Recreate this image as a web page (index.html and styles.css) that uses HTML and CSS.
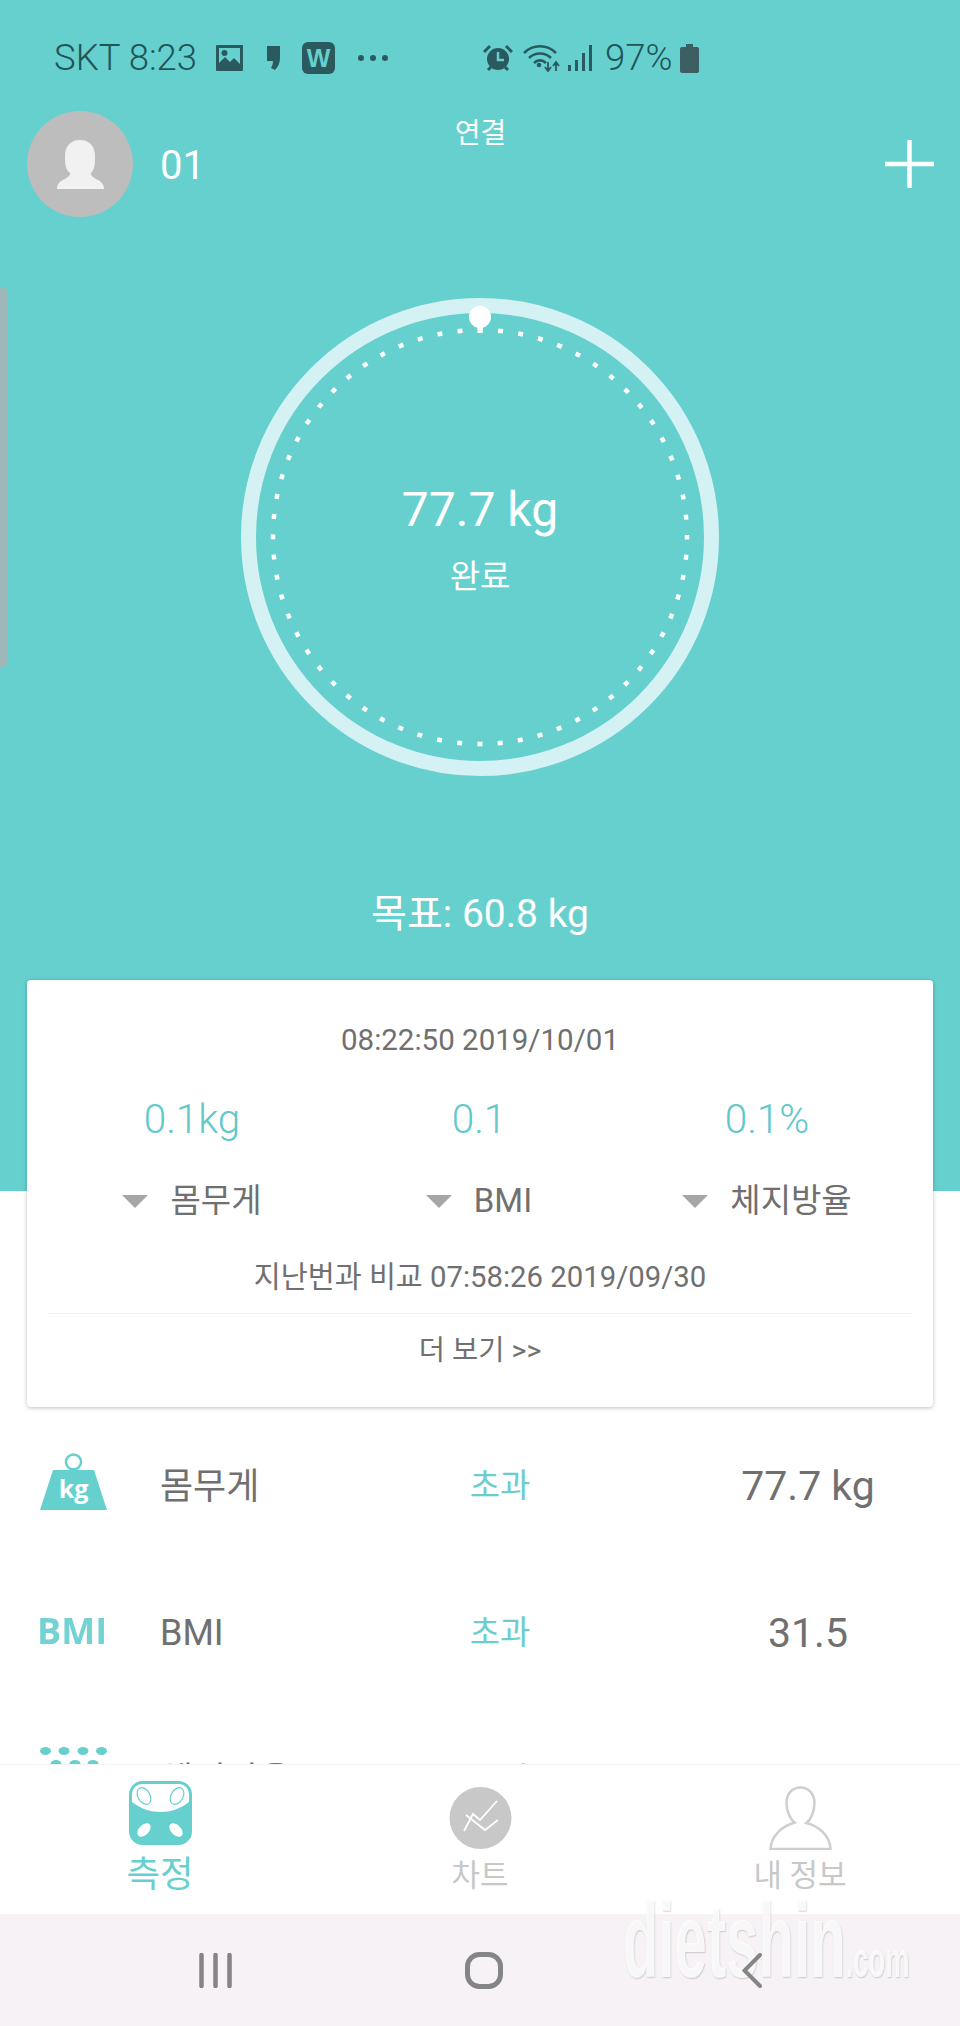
FILE: index.html
```html
<!DOCTYPE html>
<html lang="ko">
<head>
  <meta charset="UTF-8">
  <title>측정</title>
  <link rel="stylesheet" href="styles.css">
</head>
<body>
  <div class="side-handle"></div>

  <main class="screen">
    <section class="hero">
      <div class="status-bar">
        <div class="status-left">
          <span class="status-text">SKT 8:23</span>
          <svg class="icon-pic" viewBox="0 0 27 26">
            <path fill="#2b5a5e" fill-rule="evenodd" d="M1 0h25a1 1 0 0 1 1 1v24a1 1 0 0 1-1 1H1a1 1 0 0 1-1-1V1a1 1 0 0 1 1-1zM3 3v15l6-6 5 5 4-4 6 6V3z"/>
            <circle cx="8.5" cy="8" r="3" fill="#2b5a5e"/>
          </svg>
          <svg class="icon-quote" viewBox="0 0 15 24">
            <path fill="#2b5a5e" d="M1 0h13v12c0 5-2 9-5 12l-4-2c1-2 2-4 2-7H1z"/>
          </svg>
          <span class="icon-w">W</span>
          <svg class="icon-more" viewBox="0 0 32 8">
            <circle cx="4" cy="4" r="3"/><circle cx="16" cy="4" r="3"/><circle cx="28" cy="4" r="3"/>
          </svg>
        </div>
        <div class="status-right">
          <svg class="icon-alarm" viewBox="0 0 30 28">
            <circle cx="15" cy="15" r="11" fill="#2b5a5e"/>
            <path d="M15 8v8h6" fill="none" stroke="#66d0cf" stroke-width="2.5"/>
            <path d="M1 8l6-6M29 8l-6-6M5 26l3-3M25 26l-3-3" fill="none" stroke="#2b5a5e" stroke-width="3"/>
          </svg>
          <svg class="icon-wifi" viewBox="0 0 37 28">
            <g fill="none" stroke="#2b5a5e" stroke-width="2.6">
              <path d="M1 9c9-9 23-9 32 0"/>
              <path d="M6 14c6-6 16-6 22 0"/>
              <path d="M11 19c3.500-3.500 8.500-3.500 12 0"/>
            </g>
            <circle cx="16" cy="21" r="2.300" fill="#2b5a5e"/>
            <path d="M25 18v8M22 23l3 4 3-4M33 27v-8M30 22l3-4 3 4" fill="none" stroke="#2b5a5e" stroke-width="1.800"/>
          </svg>
          <svg class="icon-signal" viewBox="0 0 24 26">
            <path fill="#2b5a5e" d="M0 20h3v6H0zM7 15h3v11H7zM14 8h3v18h-3zM21 0h3v26h-3z"/>
          </svg>
          <span class="status-text status-pct">97%</span>
          <svg class="icon-battery" viewBox="0 0 19 29">
            <path fill="#3d5f63" d="M6 0h7v3h4a2 2 0 0 1 2 2v22a2 2 0 0 1-2 2H2a2 2 0 0 1-2-2V5a2 2 0 0 1 2-2h4z"/>
          </svg>
        </div>
      </div>

      <div class="profile-row">
        <div class="profile">
          <svg class="avatar" viewBox="0 0 106 106">
            <circle cx="53" cy="53" r="53" fill="#bdbdbd"/>
            <path fill="#f1f1f1" d="M38 45C38 35 44 29 53 29s15 6 15 16c0 7 0 13-4 17-1 2 2 4 5 6 5 2 8 5 8 10H30c0-5 3-8 8-10 3-2 6-4 5-6-5-4-5-10-5-17z"/>
          </svg>
          <span class="profile-name">01</span>
        </div>
        <span class="link-state">연결</span>
        <svg class="icon-plus" viewBox="0 0 49 48">
          <path d="M0 24h49M24.500 0v48" fill="none" stroke="#fff" stroke-width="4.500"/>
        </svg>
      </div>

      <div class="gauge">
        <svg class="gauge-ring" viewBox="0 0 480 480">
          <circle cx="240" cy="240" r="231.500" fill="none" stroke="#d4f1f3" stroke-width="15"/>
          <circle cx="240" cy="240" r="207" fill="none" stroke="#fff" stroke-width="4.500" stroke-dasharray="5 15.320" stroke-dashoffset="2.500"/>
          <circle cx="240" cy="20" r="11" fill="#fff"/>
          <rect x="237.500" y="26" width="5" height="10" fill="#fff"/>
        </svg>
        <div class="gauge-text">
          <div class="gauge-value">77.7 kg</div>
          <div class="gauge-label">완료</div>
        </div>
      </div>

      <div class="goal">목표: 60.8 kg</div>

      <div class="card">
        <div class="card-date">08:22:50 2019/10/01</div>
        <div class="card-grid">
          <div class="card-value">0.1kg</div>
          <div class="card-value">0.1</div>
          <div class="card-value">0.1%</div>
          <div class="card-label"><i class="tri"></i>몸무게</div>
          <div class="card-label"><i class="tri"></i>BMI</div>
          <div class="card-label"><i class="tri"></i>체지방율</div>
        </div>
        <div class="card-compare">지난번과 비교 07:58:26 2019/09/30</div>
        <div class="card-more">더 보기 &gt;&gt;</div>
      </div>
    </section>

    <section class="rows">
      <div class="row">
        <svg class="row-icon" viewBox="0 0 67 57">
          <circle cx="33.500" cy="9" r="7.500" fill="none" stroke="#66d0cf" stroke-width="2.500"/>
          <path fill="#66d0cf" d="M31 15h5v3h-5zM13 17h41l13 40H0z"/>
          <text x="33.500" y="45" class="kg-text">kg</text>
        </svg>
        <span class="row-name row-name-ko">몸무게</span>
        <span class="row-state">초과</span>
        <span class="row-value">77.7 kg</span>
      </div>
      <div class="row">
        <span class="bmi-icon">BMI</span>
        <span class="row-name">BMI</span>
        <span class="row-state">초과</span>
        <span class="row-value">31.5</span>
      </div>
      <div class="row">
        <svg class="row-icon" viewBox="0 0 67 57">
          <g fill="#66d0cf">
            <ellipse cx="5.500" cy="4" rx="5.500" ry="4"/><ellipse cx="24" cy="4" rx="5.500" ry="4"/>
            <ellipse cx="43" cy="4" rx="5.500" ry="4"/><ellipse cx="61.500" cy="4" rx="5.500" ry="4"/>
            <ellipse cx="16" cy="17" rx="5.500" ry="4"/><ellipse cx="35" cy="17" rx="5.500" ry="4"/>
            <ellipse cx="53" cy="17" rx="5.500" ry="4"/>
          </g>
        </svg>
        <span class="row-name row-name-ko">체지방율</span>
        <span class="row-state">초과</span>
        <span class="row-value">0.1%</span>
      </div>
    </section>
  </main>

  <nav class="tabbar">
    <div class="tab tab-active">
      <svg class="tab-icon" viewBox="0 0 63 64">
        <rect x="1.500" y="1.500" width="60" height="61" rx="12" fill="#66d0cf" stroke="#66d0cf" stroke-width="3"/>
        <path fill="#fff" d="M3 13a10 10 0 0 1 10-10h37a10 10 0 0 1 10 10v8c-9 7-19 10-28.500 10S12 28 3 21z"/>
        <ellipse cx="15" cy="15" rx="6" ry="9" transform="rotate(-30 15 15)" fill="#fff" stroke="#66d0cf" stroke-width="1.200"/>
        <ellipse cx="48" cy="15" rx="6" ry="9" transform="rotate(30 48 15)" fill="#fff" stroke="#66d0cf" stroke-width="1.200"/>
        <ellipse cx="15" cy="49" rx="5" ry="8" transform="rotate(45 15 49)" fill="#fff"/>
        <ellipse cx="47" cy="49" rx="5" ry="8" transform="rotate(-45 47 49)" fill="#fff"/>
      </svg>
      <span class="tab-label">측정</span>
    </div>
    <div class="tab">
      <svg class="tab-icon" viewBox="0 0 63 64">
        <circle cx="31.500" cy="32" r="31" fill="#c8c8c8"/>
        <path d="M15 45l9-17 7 6 17-19M17 29l19 15 13-10" fill="none" stroke="#fff" stroke-width="1.800"/>
      </svg>
      <span class="tab-label">차트</span>
    </div>
    <div class="tab">
      <svg class="tab-icon" viewBox="0 0 63 64">
        <path d="M31.500 1.500c-8 0-14 6-14 15 0 9 4 17 8 20C14 40 2 49 1.500 63h60c-.5-14-12.500-23-24-26 4-3 8-11 8-20 0-9-6-15.500-14-15.500z" fill="none" stroke="#cfcfcf" stroke-width="2.500"/>
      </svg>
      <span class="tab-label">내 정보</span>
    </div>
  </nav>

  <div class="sys-nav">
    <svg class="sys-icon" viewBox="0 0 33 35">
      <path d="M2.500 2v31M16.500 2v31M30.500 2v31" fill="none" stroke="#858585" stroke-width="4.500" stroke-linecap="round"/>
    </svg>
    <svg class="sys-icon" viewBox="0 0 38 37">
      <rect x="2.500" y="2.500" width="33" height="32" rx="12" fill="none" stroke="#858585" stroke-width="5"/>
    </svg>
    <svg class="sys-icon sys-back" viewBox="0 0 20 35">
      <path d="M18 2L2.500 17.500 18 33" fill="none" stroke="#858585" stroke-width="4" stroke-linecap="round"/>
    </svg>
  </div>

  <div class="watermark"><span class="wm-big">dietshin</span><span class="wm-small">.com</span></div>
</body>
</html>
```

FILE: styles.css
```css
* {
  box-sizing: border-box;
}

html, body {
  margin: 0;
  padding: 0;
}

body {
  position: relative;
  width: 960px;
  height: 2026px;
  overflow: hidden;
  display: flex;
  flex-direction: column;
  background: #fff;
  font-family: Roboto, "Noto Sans CJK KR", sans-serif;
  color: #707070;
}

.side-handle {
  position: absolute;
  left: 0;
  top: 287px;
  width: 8px;
  height: 381px;
  background: #9db8b6;
  border-radius: 0 10px 10px 0;
}

.screen {
  height: 1764px;
  overflow: hidden;
  flex: none;
}

/* teal part stops behind the card */
.hero {
  background: linear-gradient(#66d0cf 1191px, #fff 1191px);
  height: 1407px;
  padding-top: 42px;
}

.status-bar {
  height: 32px;
  display: flex;
  align-items: center;
  padding-left: 54px;
}

.status-left,
.status-right {
  display: flex;
  align-items: center;
}

.status-left {
  width: 429px;
}

.status-text {
  font-size: 36.500px;
  font-weight: 300;
  line-height: 32px;
  color: #1f5559;
}

.icon-pic {
  width: 27px;
  height: 26px;
  margin-left: 19px;
}

.icon-quote {
  width: 15px;
  height: 24px;
  margin-left: 23px;
}

.icon-w {
  width: 33px;
  height: 32px;
  margin-left: 21px;
  background: #2b5a5e;
  border-radius: 6px;
  color: #66d0cf;
  font-family: "Liberation Sans", sans-serif;
  font-weight: bold;
  font-size: 25px;
  line-height: 32px;
  text-align: center;
}

.icon-more {
  width: 32px;
  height: 8px;
  margin-left: 22px;
  fill: #2b5a5e;
}

.icon-alarm {
  width: 30px;
  height: 28px;
}

.icon-wifi {
  width: 37px;
  height: 28px;
  margin-left: 10px;
}

.icon-signal {
  width: 24px;
  height: 26px;
  margin-left: 8px;
}

.status-pct {
  margin-left: 13px;
}

.icon-battery {
  width: 19px;
  height: 29px;
  margin-left: 8px;
}

.profile-row {
  height: 106px;
  margin-top: 37px;
  padding: 0 26px 0 27px;
  display: grid;
  grid-template-columns: 1fr auto 1fr;
  align-items: center;
}

.profile {
  display: flex;
  align-items: center;
  gap: 27px;
}

.avatar {
  width: 106px;
  height: 106px;
}

.profile-name {
  margin-top: 2px;
  font-size: 40px;
  color: #fff;
}

.link-state {
  align-self: start;
  margin-top: 9px;
  font-size: 28px;
  line-height: 28px;
  color: #fff;
}

.icon-plus {
  justify-self: end;
  width: 49px;
  height: 48px;
}

.gauge {
  width: 480px;
  height: 480px;
  margin: 80px auto 0;
  display: grid;
}

.gauge-ring,
.gauge-text {
  grid-area: 1 / 1;
}

.gauge-ring {
  width: 480px;
  height: 480px;
}

.gauge-text {
  color: #fff;
  text-align: center;
  padding-top: 185px;
}

.gauge-value {
  font-size: 48px;
  line-height: 56px;
}

.gauge-label {
  margin-top: 19px;
  font-size: 33px;
  line-height: 40px;
}

.goal {
  margin-top: 111px;
  color: #fff;
  font-size: 39px;
  line-height: 52px;
  text-align: center;
}

.card {
  width: 906px;
  height: 427px;
  margin: 40px 27px 0;
  padding-top: 40px;
  background: #fff;
  border-radius: 4px;
  box-shadow: 0 1px 4px rgba(0,0,0,0.25);
  text-align: center;
}

.card-date {
  font-size: 29.500px;
  line-height: 40px;
}

.card-grid {
  display: grid;
  grid-template-columns: 330px 244px 332px;
  margin-top: 34px;
}

.card-value {
  font-size: 40.500px;
  font-weight: 300;
  line-height: 50px;
  color: #5fc8c8;
}

.card-label {
  margin-top: 36px;
  font-size: 33px;
  line-height: 42px;
  display: flex;
  justify-content: center;
  align-items: center;
  gap: 22px;
}

.tri {
  width: 0;
  height: 0;
  border-left: 13px solid transparent;
  border-right: 13px solid transparent;
  border-top: 13px solid #a6a6a6;
}

.card-compare {
  margin-top: 35px;
  font-size: 29.300px;
  line-height: 40px;
}

.card-more {
  margin: 16px 21px 0;
  padding-top: 17px;
  border-top: 1px solid #f2f2f2;
  font-size: 28.500px;
  line-height: 40px;
}

.rows {
  padding: 5px 0 0 40px;
}

.row {
  height: 147px;
  display: grid;
  grid-template-columns: 120px 280px 278px 180px;
  align-items: center;
}

.row-icon {
  width: 67px;
  height: 57px;
  margin-bottom: 8px;
}

.kg-text {
  font-family: "Open Sans", sans-serif;
  font-weight: bold;
  font-size: 25px;
  fill: #fff;
  text-anchor: middle;
}

.bmi-icon {
  margin: 0 0 5px -3px;
  font-family: "Open Sans", sans-serif;
  font-weight: bold;
  font-size: 36px;
  color: #74d3d2;
  filter: blur(0.7px);
}

.row-name {
  font-size: 36px;
}

.row-name-ko {
  margin-bottom: 6px;
}

.row-state {
  width: 120px;
  margin-bottom: 6px;
  text-align: center;
  font-size: 33px;
  color: #6dcdcd;
}

.row-value {
  text-align: center;
  font-size: 41px;
}

.tabbar {
  height: 150px;
  flex: none;
  display: grid;
  grid-template-columns: 320px 320px 320px;
  background: #fff;
  border-top: 1px solid #f3f3f3;
}

.tab {
  display: flex;
  flex-direction: column;
  align-items: center;
  padding-top: 21px;
  color: #c8c8c8;
}

.tab-icon {
  width: 63px;
  height: 64px;
}

.tab-label {
  margin-top: 6px;
  font-size: 31px;
  line-height: 40px;
}

.tab-active {
  padding-top: 16px;
  color: #66d0cf;
}

.tab-active .tab-label {
  font-size: 36.500px;
  margin-top: 10px;
}

.sys-nav {
  height: 112px;
  flex: none;
  background: #f6f2f6;
  display: grid;
  grid-template-columns: 266px 277px auto;
  align-items: center;
  padding-left: 199px;
}

.sys-icon:nth-child(1) {
  width: 33px;
  height: 35px;
}

.sys-icon:nth-child(2) {
  width: 38px;
  height: 37px;
}

.sys-icon:nth-child(3) {
  width: 20px;
  height: 35px;
}

/* chevron stays readable on top of the stamp */
.sys-back {
  position: relative;
  z-index: 1;
}

/* site stamp over the bottom corner */
.watermark {
  position: absolute;
  left: 623px;
  top: 1880px;
  white-space: nowrap;
  color: rgba(255,255,255,0.85);
  font-family: "Liberation Sans", sans-serif;
  font-weight: bold;
  text-shadow: 1px 1px 2px rgba(0,0,0,0.18);
  transform: scaleX(0.548);
  transform-origin: left top;
}

.wm-big {
  font-size: 106px;
}

.wm-small {
  font-size: 50px;
}
```
